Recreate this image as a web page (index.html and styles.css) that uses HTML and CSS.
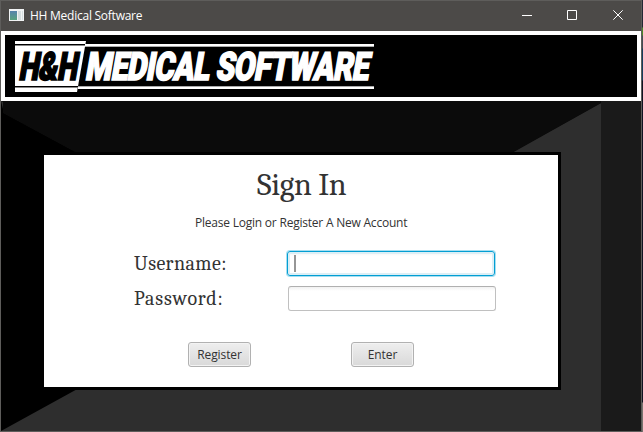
FILE: index.html
```html
<!DOCTYPE html>
<html lang="en">
<head>
<meta charset="utf-8">
<title>HH Medical Software</title>
<link rel="stylesheet" href="styles.css">
</head>
<body>
<div class="desktop">
<div class="window">
  <header class="titlebar">
    <svg class="app-icon" width="15" height="12" viewBox="0 0 15 12">
      <defs><linearGradient id="pane" x2="0" y2="1"><stop offset="0" stop-color="#5683ad"/><stop offset="1" stop-color="#58a27d"/></linearGradient></defs>
      <path fill="#f1f3f4" d="M0 0h15v12H0z"/><path fill="url(#pane)" d="M1 2h7v9H1z"/><path fill="#d5dedf" d="M9 2h3v9H9zM13 2h1v9h-1z"/>
    </svg>
    <span class="title">HH Medical Software</span>
    <svg class="controls" width="138" height="30" viewBox="0 0 138 30" fill="none" stroke="#fff">
      <path d="M19 14.500h10M64.500 9.500h9v9h-9zM110.300 9.300l9.400 9.400M119.700 9.300l-9.400 9.400"/>
    </svg>
  </header>
  <div class="banner">
    <svg width="632" height="62" viewBox="5 35 632 62">
      <path fill="#fff" d="M15 41h71L77 92H15z"/>
      <path fill="#000" d="M15 44h70.500v2H15zM15 86h63v2H15z"/>
      <path fill="#888" d="M15 45h70v1H15zM15 87h63v1H15z"/>
      <path fill="#fff" d="M85 44h289v2H85zM78 87h296v2H78z"/>
      <path fill="#aaa" d="M85 46h289v1H85zM78 86h296v1H78z"/>
      <text class="logo logo-dark" transform="translate(18 79.500) skewX(-10)" textLength="58" lengthAdjust="spacingAndGlyphs">H&amp;H</text>
      <text class="logo logo-light" transform="translate(84.500 79.500) skewX(-10)" textLength="283" lengthAdjust="spacingAndGlyphs">MEDICAL SOFTWARE</text>
    </svg>
  </div>
  <main class="stage">
    <svg class="backdrop" width="640" height="330" viewBox="1 101 640 330">
      <path fill="#2e2e2e" d="M1 101h600v330H1z"/>
      <path fill="#0b0b0b" d="M1 101h600v2L321 258z"/>
      <path fill="#000" d="M1 101l3 12L321 284L321 255L1 431z"/>
      <path fill="#0b0b0b" d="M3 101v12l100 54h384L601 103v-2z"/>
      <path fill="#1a1a1a" d="M601 101h40v330h-40z"/>
    </svg>
    <form class="card">
      <h1>Sign In</h1>
      <p>Please Login or Register A New Account</p>
      <div class="fields">
        <label class="user-label">Username:</label><div class="field focused"><i class="caret"></i></div>
        <label class="pass-label">Password:</label><div class="field"></div>
      </div>
      <div class="actions"><button type="button">Register</button><button type="button">Enter</button></div>
    </form>
  </main>
</div>
<div class="edge"></div>
</div>
</body>
</html>
```

FILE: styles.css
```css
* { box-sizing: border-box; }
body { margin: 0; overflow: hidden; font-family: "Open Sans", sans-serif; font-size: 12px; }
.desktop { display: flex; width: 643px; height: 432px; }
.window { width: 642px; height: 432px; border: 1px solid #5e5d5b; display: flex; flex-direction: column; }
.edge { width: 1px; background: linear-gradient(#242835 0 27px, #4c8929 28px 35px, #424c54 36px 48px, #163d5c 49px 80px, #101322 81px 402px, #77736e 403px); }
.titlebar { height: 30px; background: #4c4a48; color: #fff; display: flex; align-items: center; padding-left: 8px; }
.app-icon { margin-top: -2px; }
.title { margin-left: 6px; line-height: 30px; white-space: nowrap; letter-spacing: -0.25px; }
.controls { margin-left: auto; }
.banner { height: 70px; border: 4px solid #fff; background: #000; }
.banner svg { display: block; }
.logo { font: 900 39px Roboto, sans-serif; letter-spacing: -0.8px; stroke-width: 1.6; }
.logo-dark { fill: #000; stroke: #000; }
.logo-light { fill: #fff; stroke: #fff; }
.stage { position: relative; height: 330px; padding: 51px 0 0 40px; }
.backdrop { position: absolute; left: 0; top: 0; }
.card { position: relative; width: 520px; height: 238px; border: 3px solid #000; background: #fff; color: #333; margin: 0; }
h1, label { font-family: Cambria, Caladea, "Liberation Serif", serif; font-weight: 400; }
h1 { margin: 12px 0 0 213px; font-size: 32px; line-height: 36px; letter-spacing: -0.35px; }
p { margin: 12px 0 0 151px; line-height: 16px; white-space: nowrap; letter-spacing: -0.22px; }
.fields { margin: 20px 0 0 90px; display: grid; grid-template-columns: 154px 208px; grid-template-rows: 25px 25px; row-gap: 10px; }
label { font-size: 20px; line-height: 25px; letter-spacing: 0.4px; }
.pass-label { letter-spacing: 0.8px; }
.field { height: 25px; border: 1px solid #c0c0c0; border-top-color: #b0b0b0; border-radius: 3px; background: linear-gradient(#f1f1f1, #fff 4px); }
.focused { position: relative; left: -1px; border: 1px solid #039ed3; box-shadow: 0 0 0 1px #a7dff1, inset 0 0 0 2px #dceff6; }
.caret { display: block; width: 2px; height: 17px; margin: 3px 0 0 6px; background: #969696; }
.actions { margin: 31px 0 0 144px; display: flex; gap: 100px; }
button { width: 63px; height: 25px; padding: 0; border: 1px solid #b1b1b1; border-radius: 3px; background: linear-gradient(#eee, #d9d9d9); box-shadow: inset 0 0 0 1px #f3f3f3; color: #333; font: 12px "Open Sans", sans-serif; letter-spacing: -0.1px; }
```
